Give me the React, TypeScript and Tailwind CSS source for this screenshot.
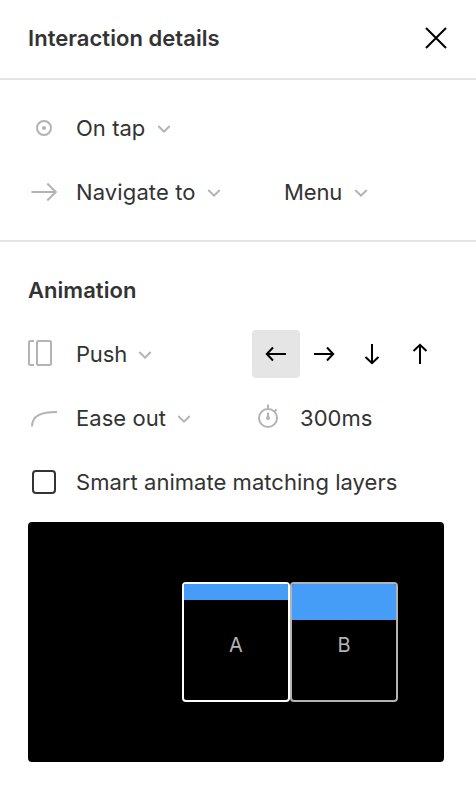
import type { ReactNode } from "react";

function Icon({ children }: { children: ReactNode }) {
  return (
    <svg width="32" height="32" viewBox="0 0 32 32" fill="none" stroke="#b3b3b3" strokeWidth="2" className="mr-4 shrink-0">
      {children}
    </svg>
  );
}

function Select({ label, className = "" }: { label: string; className?: string }) {
  return (
    <button className="flex items-center whitespace-nowrap">
      <span className={className}>{label}</span>
      <svg width="14" height="10" viewBox="0 0 14 10" fill="none" stroke="#b3b3b3" strokeWidth="2" className="ml-[11.5px] mt-0.5">
        <path d="M1.3 2l5.7 5.7L12.7 2" />
      </svg>
    </button>
  );
}

const directions = [
  { name: "Left", path: "M34 24H15M21 17.5L14.8 24l6.2 6.5" },
  { name: "Right", path: "M14 24h19M27 17.5L33.2 24 27 30.5" },
  { name: "Down", path: "M24 14v19M17.5 27l6.5 6.2 6.5-6.2" },
  { name: "Up", path: "M24 34V15M17.5 21l6.5-6.2 6.5 6.2" },
];

function Directions() {
  return (
    <div className="flex">
      {directions.map((d, i) => (
        <button key={d.name} aria-label={d.name} className={i === 0 ? "size-12 rounded-[4px] bg-[#e5e5e5]" : "size-12"}>
          <svg width="48" height="48" viewBox="0 0 48 48" fill="none" stroke="#000" strokeWidth="2">
            <path d={d.path} />
          </svg>
        </button>
      ))}
    </div>
  );
}

export default function App() {
  return (
    <main className="h-[786px] w-[476px] overflow-hidden bg-white font-['Inter',sans-serif] text-[22px] leading-8 tracking-[0.04px] text-[#333]">
      <header className="flex h-20 items-center justify-between border-b-2 border-[#e5e5e5] px-7 pb-0.5">
        <h1 className="font-semibold">Interaction details</h1>
        <button aria-label="Close">
          <svg width="24" height="24" viewBox="0 0 24 24" fill="none" stroke="#000" strokeWidth="2" className="mb-px">
            <path d="M2 2l20 20M22 2L2 22" />
          </svg>
        </button>
      </header>

      <section className="border-b-2 border-[#e5e5e5] px-7 py-4">
        <div className="flex h-16 items-center">
          <Icon>
            <circle cx="16" cy="16" r="7" />
            <circle cx="16" cy="16" r="2" fill="#b3b3b3" stroke="none" />
          </Icon>
          <Select label="On tap" />
        </div>
        <div className="flex h-16 items-center">
          <Icon>
            <path d="M3.5 16H28M19.3 7.5l8.5 8.5-8.5 8.5" />
          </Icon>
          <div className="w-52">
            <Select label="Navigate to" className="tracking-[0.12px]" />
          </div>
          <Select label="Menu" className="tracking-[-0.16px]" />
        </div>
      </section>

      <section className="px-7 pt-4">
        <h2 className="flex h-16 items-center font-semibold">Animation</h2>
        <div className="flex h-16 items-center">
          <Icon>
            <path d="M6 3H2.5Q1 3 1 4.5v21Q1 27 2.5 27H6" />
            <rect x="9" y="3" width="14" height="24" rx="1.5" />
          </Icon>
          <div className="w-44">
            <Select label="Push" className="tracking-[-0.18px]" />
          </div>
          <Directions />
        </div>
        <div className="flex h-16 items-center">
          <Icon>
            <path d="M4 24.5C4 14 12 10 29 10" />
          </Icon>
          <div className="w-44">
            <Select label="Ease out" />
          </div>
          <Icon>
            <circle cx="16" cy="16" r="9" />
            <path d="M16 2.5V7M22 10l2.5-2.5M16 10.5V16" />
            <circle cx="16" cy="16" r="2" fill="#b3b3b3" stroke="none" />
          </Icon>
          <span>300ms</span>
        </div>
        <label className="flex h-16 items-center">
          <span className="mr-5 ml-1 size-6 rounded-[4px] border-2 border-[#333]" />
          Smart animate matching layers
        </label>
        <div className="mt-2 flex h-60 w-[416px] items-center justify-end rounded-[4px] bg-black pr-[46px] text-[20px] text-[#b3b3b3]">
          <div className="relative flex h-[120px] w-[108px] flex-col overflow-hidden rounded-[4px] border-2 border-white">
            <div className="h-4 bg-[#459df7]" />
            <span className="absolute inset-0 flex items-center justify-center pt-1.5">A</span>
          </div>
          <div className="relative flex h-[120px] w-[108px] flex-col overflow-hidden rounded-[4px] border-2 border-[#b3b3b3]">
            <div className="h-9 bg-[#459df7]" />
            <span className="absolute inset-0 flex items-center justify-center pt-1.5">B</span>
          </div>
        </div>
      </section>
    </main>
  );
}
